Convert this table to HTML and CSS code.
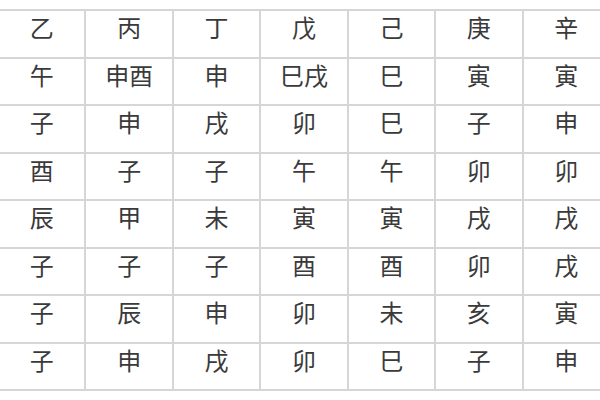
FILE: index.html
```html
<!DOCTYPE html>
<html>
<head>
<meta charset="utf-8">
<link rel="stylesheet" href="styles.css">
</head>
<body>
<div class="wrap">
<table class="grid">
<tr><td>乙</td><td>丙</td><td>丁</td><td>戊</td><td>己</td><td>庚</td><td>辛</td></tr>
<tr><td>午</td><td>申酉</td><td>申</td><td>巳戌</td><td>巳</td><td>寅</td><td>寅</td></tr>
<tr><td>子</td><td>申</td><td>戌</td><td>卯</td><td>巳</td><td>子</td><td>申</td></tr>
<tr><td>酉</td><td>子</td><td>子</td><td>午</td><td>午</td><td>卯</td><td>卯</td></tr>
<tr><td>辰</td><td>甲</td><td>未</td><td>寅</td><td>寅</td><td>戌</td><td>戌</td></tr>
<tr><td>子</td><td>子</td><td>子</td><td>酉</td><td>酉</td><td>卯</td><td>戌</td></tr>
<tr><td>子</td><td>辰</td><td>申</td><td>卯</td><td>未</td><td>亥</td><td>寅</td></tr>
<tr><td>子</td><td>申</td><td>戌</td><td>卯</td><td>巳</td><td>子</td><td>申</td></tr>
</table>
</div>
</body>
</html>
```
FILE: styles.css
```css
html, body {
  margin: 0;
  padding: 0;
  background: #fff;
  width: 600px;
  height: 400px;
  overflow: hidden;
}
.wrap {
  padding-top: 9px;
  margin-left: -3px;
}
.grid {
  border-collapse: collapse;
  table-layout: fixed;
  width: 614px;
}
.grid td {
  border: 2px solid #d6d6d6;
  height: 47.5px;
  box-sizing: border-box;
  padding: 0 0 13px 0;
  text-align: center;
  vertical-align: middle;
  font-family: "Noto Sans CJK SC", "Noto Sans CJK TC", sans-serif;
  font-size: 24px;
  line-height: 1;
  color: #3a3a3a;
  font-weight: 400;
}
```
